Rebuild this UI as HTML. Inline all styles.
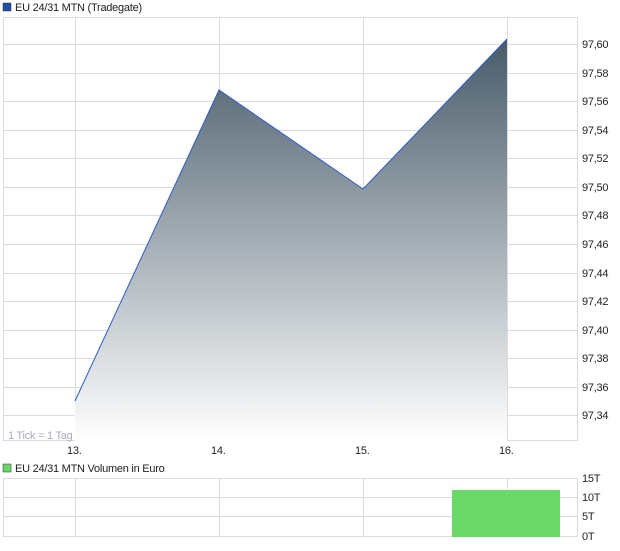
<!DOCTYPE html>
<html><head><style>
body{margin:0;width:620px;height:546px;background:#fff;font-family:"Liberation Sans",sans-serif;overflow:hidden}
</style></head><body>
<svg width="620" height="546" xmlns="http://www.w3.org/2000/svg" font-family="Liberation Sans, sans-serif" font-size="11">
<defs><linearGradient id="g" x1="0" y1="39" x2="0" y2="441" gradientUnits="userSpaceOnUse">
<stop offset="0" stop-color="#485b69"/><stop offset="1" stop-color="#ffffff"/></linearGradient></defs>
<rect x="3" y="3" width="8" height="8" fill="#1f4fa8" stroke="#333" stroke-width="0.5"/>
<text x="15" y="11" fill="#222" letter-spacing="-0.25">EU 24/31 MTN (Tradegate)</text>
<g stroke="#dcdcdc" stroke-width="1">
<rect x="3.5" y="17.5" width="574" height="423" fill="none"/>
<path d="M75.5 17V441M219.5 17V441M363.5 17V441M507.5 17V441"/>
<path d="M3 44.5H578M3 73.5H578M3 101.5H578M3 130.5H578M3 158.5H578M3 187.5H578M3 215.5H578M3 244.5H578M3 273.5H578M3 301.5H578M3 330.5H578M3 358.5H578M3 387.5H578M3 415.5H578"/>
</g>
<path d="M75 401L219 90L363 189L507 39V441H75Z" fill="url(#g)"/>
<path d="M75 401L219 90L363 189L507 39" fill="none" stroke="#2a5bd0" stroke-width="1"/>
<text x="8" y="439" fill="#aab" font-size="11" letter-spacing="-0.25">1 Tick = 1 Tag</text>
<g fill="#222" letter-spacing="-0.25">
<text x="582" y="48">97,60</text><text x="582" y="77">97,58</text><text x="582" y="105">97,56</text><text x="582" y="134">97,54</text><text x="582" y="162">97,52</text><text x="582" y="191">97,50</text><text x="582" y="219">97,48</text><text x="582" y="248">97,46</text><text x="582" y="277">97,44</text><text x="582" y="305">97,42</text><text x="582" y="334">97,40</text><text x="582" y="362">97,38</text><text x="582" y="391">97,36</text><text x="582" y="419">97,34</text>
<text x="67" y="454">13.</text><text x="211" y="454">14.</text><text x="355" y="454">15.</text><text x="499" y="454">16.</text>
</g>
<rect x="3" y="464" width="8" height="8" fill="#6ad66a" stroke="#333" stroke-width="0.5"/>
<text x="15" y="472" fill="#222" letter-spacing="-0.25">EU 24/31 MTN Volumen in Euro</text>
<g stroke="#dcdcdc">
<rect x="3.5" y="478.5" width="574" height="58" fill="none"/>
<path d="M75.5 478V537M219.5 478V537M363.5 478V537M507.5 478V537M3 497.5H578M3 516.5H578"/>
</g>
<rect x="452" y="490" width="108" height="47" fill="#6ad96a"/>
<g fill="#222" letter-spacing="-0.25"><text x="582" y="482">15T</text><text x="582" y="501">10T</text><text x="582" y="520">5T</text><text x="582" y="540">0T</text></g>
</svg>
</body></html>
